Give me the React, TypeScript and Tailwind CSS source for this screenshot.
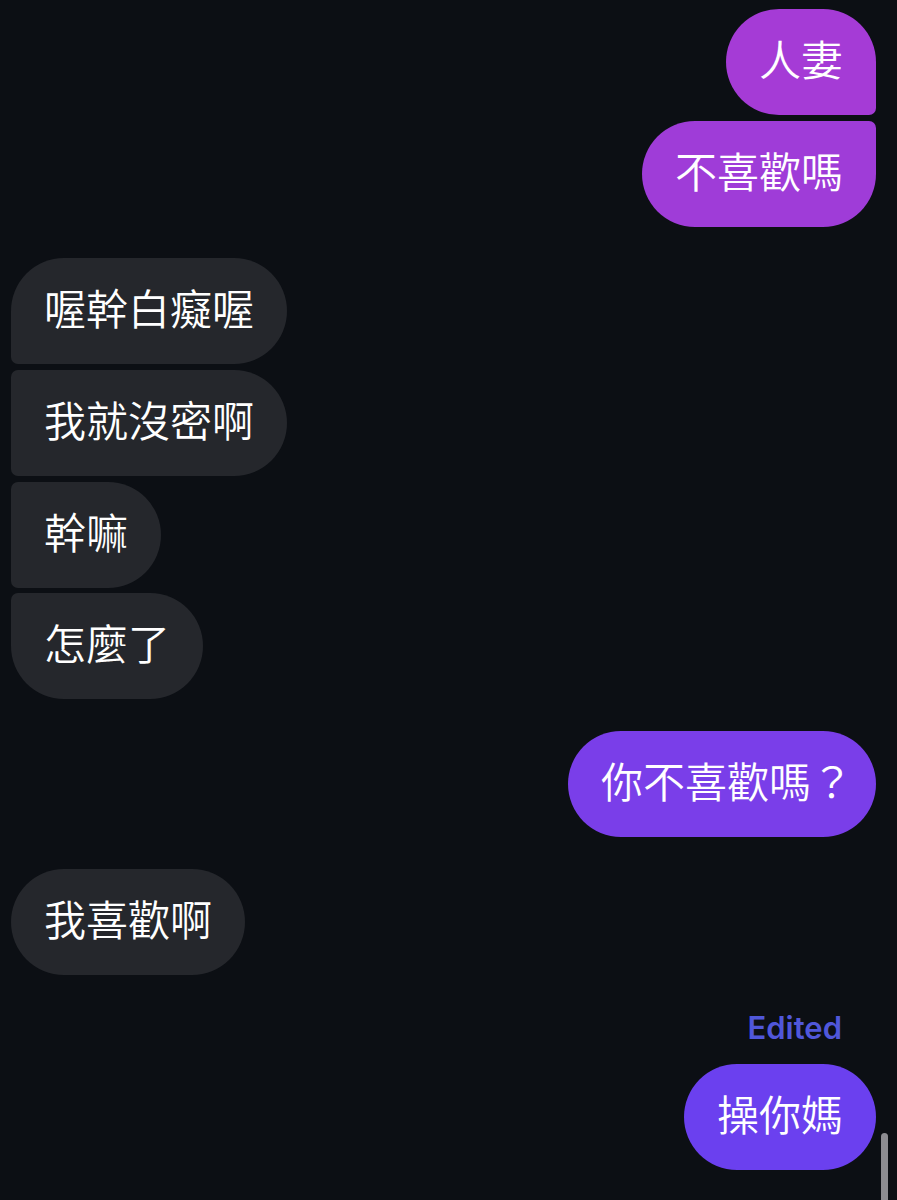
import React from 'react';

type Msg = { id: number; text: string; mine: boolean; corners: string; bg: string; gapTop: string; edited?: boolean; suffix?: string };

const messages: Msg[] = [
  { id: 1, text: '人妻', mine: true, corners: 'rounded-[53px] rounded-br-[7px]', bg: 'bg-[#a53bd6]', gapTop: 'mt-0' },
  { id: 2, text: '不喜歡嗎', mine: true, corners: 'rounded-[53px] rounded-tr-[7px]', bg: 'bg-[#9f3cd8]', gapTop: 'mt-[6px]' },
  { id: 3, text: '喔幹白癡喔', mine: false, corners: 'rounded-[53px] rounded-bl-[7px]', bg: 'bg-[#25272c]', gapTop: 'mt-[31px]' },
  { id: 4, text: '我就沒密啊', mine: false, corners: 'rounded-[53px] rounded-tl-[7px] rounded-bl-[7px]', bg: 'bg-[#25272c]', gapTop: 'mt-[6px]' },
  { id: 5, text: '幹嘛', mine: false, corners: 'rounded-[53px] rounded-tl-[7px] rounded-bl-[7px]', bg: 'bg-[#25272c]', gapTop: 'mt-[6px]' },
  { id: 6, text: '怎麼了', mine: false, corners: 'rounded-[53px] rounded-tl-[7px]', bg: 'bg-[#25272c]', gapTop: 'mt-[5px]' },
  { id: 7, text: '你不喜歡嗎', suffix: '？', mine: true, corners: 'rounded-[53px]', bg: 'bg-[#7a3ee9]', gapTop: 'mt-[32px]' },
  { id: 8, text: '我喜歡啊', mine: false, corners: 'rounded-[53px]', bg: 'bg-[#25272c]', gapTop: 'mt-[32px]' },
  { id: 9, text: '操你媽', mine: true, corners: 'rounded-[53px]', bg: 'bg-[#6b40ef]', gapTop: 'mt-[35px]', edited: true }
];

export default function App() {
  return (
    <div className="relative w-[897px] h-[1200px] overflow-hidden bg-[#0c0f14] font-['Noto_Sans_CJK_TC','Noto_Sans',sans-serif]">
      <div className="flex flex-col pt-[9px] pl-[11px] pr-[21px]">
        {messages.map((m) => (
          <div key={m.id} className={`flex flex-col ${m.mine ? 'items-end' : 'items-start'} ${m.gapTop}`}>
            {m.edited && (
              <p className="mb-[18px] mr-[34px] text-[31px] leading-[36px] font-semibold text-[#5057da] font-['Inter','Roboto',sans-serif]">
                Edited
              </p>
            )}
            <div className={`h-[106px] px-[33px] pb-[9px] flex items-center text-white text-[42px] font-[350] ${m.bg} ${m.corners}`}>
              {m.text}
              {m.suffix && <span className="-mr-[10px]">{m.suffix}</span>}
            </div>
          </div>
        ))}
      </div>
      {/* scroll indicator */}
      <div className="absolute right-[9px] top-[1133px] w-[7px] h-[80px] rounded-full bg-[#8d8d92]" />
    </div>
  );
}
